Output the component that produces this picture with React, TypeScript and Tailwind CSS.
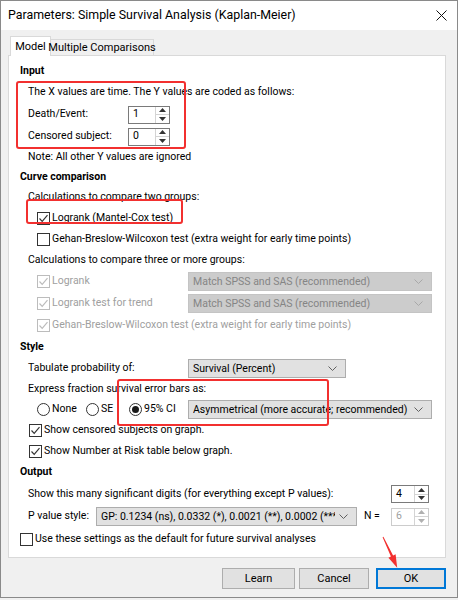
import { type JSX, type ReactNode } from "react"

const font = { fontFamily: 'Roboto, "Liberation Sans", sans-serif' }

function Check({ on, disabled }: { on?: boolean; disabled?: boolean }): JSX.Element {
  const c = disabled ? "#bcbcbc" : "#333333"
  return (
    <span className={`inline-flex h-[13px] w-[13px] shrink-0 items-center justify-center border bg-white ${disabled ? "border-[#bcbcbc]" : "border-[#333333]"}`}>
      {on && (
        <svg width="11" height="11" viewBox="0 0 11 11">
          <polyline points="1.5,5.5 4.2,8.3 9.5,2.2" fill="none" stroke={c} strokeWidth="1.2" />
        </svg>
      )}
    </span>
  )
}

function Radio({ on }: { on?: boolean }): JSX.Element {
  return (
    <span className="inline-flex h-[13px] w-[13px] shrink-0 items-center justify-center rounded-full border border-[#333333] bg-white">
      {on && <span className="h-[7px] w-[7px] rounded-full bg-[#1a1a1a]" />}
    </span>
  )
}

function Chevron({ color = "#606060" }: { color?: string }): JSX.Element {
  return (
    <svg width="9" height="5" viewBox="0 0 9 5" className="shrink-0">
      <polyline points="0.5,0.5 4.5,4.5 8.5,0.5" fill="none" stroke={color} strokeWidth="1" />
    </svg>
  )
}

function Select({ text, width, disabled }: { text: string; width: string; disabled?: boolean }): JSX.Element {
  return (
    <div
      className={`flex h-[19px] shrink-0 items-center gap-1 border pl-[4px] pr-[8px] ${width} ${
        disabled ? "border-[#c4c4c4] bg-[#cccccc] text-[#858585]" : "border-[#adadad] bg-[#e1e1e1] text-black"
      }`}
    >
      <span className="flex-1 overflow-hidden whitespace-nowrap leading-[17px]">{text}</span>
      <Chevron color={disabled ? "#a8a8a8" : "#606060"} />
    </div>
  )
}

function Spin({ value, width = "w-[42px]", disabled }: { value: string; width?: string; disabled?: boolean }): JSX.Element {
  const c = disabled ? "#b0b0b0" : "#333333"
  return (
    <div className={`flex h-[18px] shrink-0 border bg-white ${width} ${disabled ? "border-[#cccccc] text-[#a0a0a0]" : "border-[#7a7a7a] text-black"}`}>
      <span className="flex flex-1 items-center pl-[4px]">{value}</span>
      <div className="flex w-[14px] flex-col border-l border-[#d4d4d4]">
        <div className="flex flex-1 items-center justify-center border-b border-[#d4d4d4]">
          <svg width="7" height="4" viewBox="0 0 7 4"><polygon points="0,4 3.5,0 7,4" fill={c} /></svg>
        </div>
        <div className="flex flex-1 items-center justify-center">
          <svg width="7" height="4" viewBox="0 0 7 4"><polygon points="0,0 7,0 3.5,4" fill={c} /></svg>
        </div>
      </div>
    </div>
  )
}

function Row({ h, className = "", children }: { h: string; className?: string; children: ReactNode }): JSX.Element {
  return <div className={`flex items-center whitespace-nowrap ${h} ${className}`}>{children}</div>
}

function Button({ label, width, primary }: { label: string; width: string; primary?: boolean }): JSX.Element {
  return (
    <div
      className={`flex h-[21px] items-center justify-center bg-[#e1e1e1] ${width} ${
        primary ? "border-2 border-[#0078d7]" : "border border-[#adadad]"
      }`}
    >
      {label}
    </div>
  )
}

export default function App(): JSX.Element {
  return (
    <div className="relative h-[600px] w-[458px] overflow-hidden bg-[#f0f0f0] text-[10.5px] leading-none text-black" style={font}>
      <div className="flex h-[598px] flex-col border border-[#8a8a8a]">
        {/* title bar */}
        <div className="flex h-[29px] shrink-0 items-center justify-between bg-white pl-[7px] pr-[10px] text-[12.4px]">
          <span>Parameters: Simple Survival Analysis (Kaplan-Meier)</span>
          <svg width="11" height="11" viewBox="0 0 11 11">
            <path d="M0.5 0.5 L10.5 10.5 M10.5 0.5 L0.5 10.5" stroke="#111" strokeWidth="1" />
          </svg>
        </div>

        <div className="flex-1 px-[7px] pt-[6px]">
          {/* tabs */}
          <div className="relative z-10 flex h-[20px] items-end whitespace-nowrap pl-[2px] text-[11px]">
            <div className="flex h-[20px] w-[41px] items-center justify-center border border-b-0 border-[#d9d9d9] bg-white pb-[1px]">
              Model
            </div>
            <div className="flex h-[17px] w-[103px] items-center justify-center border border-l-0 border-[#d9d9d9] bg-[#f0f0f0]">
              Multiple Comparisons
            </div>
          </div>

          {/* model page */}
          <div className="-mt-px h-[503px] w-[438px] border border-[#d9d9d9] bg-white pl-[11px] pt-[5px]">
            <Row h="h-[20px]" className="font-bold">Input</Row>
            <Row h="h-[22px]" className="pl-[8px]">The X values are time. The Y values are coded as follows:</Row>
            <Row h="h-[23px]" className="pl-[8px]">
              <span className="w-[100px]">Death/Event:</span>
              <Spin value="1" />
            </Row>
            <Row h="h-[21px]" className="pl-[8px]">
              <span className="w-[100px]">Censored subject:</span>
              <Spin value="0" />
            </Row>
            <Row h="h-[21px]" className="pl-[8px]">Note: All other Y values are ignored</Row>

            <Row h="h-[19px]" className="font-bold">Curve comparison</Row>
            <Row h="h-[21px]" className="pl-[8px]">Calculations to compare two groups:</Row>
            <Row h="h-[21px]" className="gap-[2px] pl-[17px]">
              <Check on />
              <span>Logrank (Mantel-Cox test)</span>
            </Row>
            <Row h="h-[21px]" className="gap-[2px] pl-[17px]">
              <Check />
              <span>Gehan-Breslow-Wilcoxon test (extra weight for early time points)</span>
            </Row>
            <Row h="h-[21px]" className="pl-[8px]">Calculations to compare three or more groups:</Row>
            <Row h="h-[21px]" className="pl-[17px] text-[#a0a0a0]">
              <div className="flex w-[151px] items-center gap-[2px]">
                <Check on disabled />
                <span>Logrank</span>
              </div>
              <Select text="Match SPSS and SAS (recommended)" width="w-[244px]" disabled />
            </Row>
            <Row h="h-[22px]" className="pl-[17px] text-[#a0a0a0]">
              <div className="flex w-[151px] items-center gap-[2px]">
                <Check on disabled />
                <span>Logrank test for trend</span>
              </div>
              <Select text="Match SPSS and SAS (recommended)" width="w-[244px]" disabled />
            </Row>
            <Row h="h-[23px]" className="gap-[2px] pl-[17px] text-[#a0a0a0]">
              <Check on disabled />
              <span>Gehan-Breslow-Wilcoxon test (extra weight for early time points)</span>
            </Row>

            <Row h="h-[20px]" className="font-bold">Style</Row>
            <Row h="h-[22px]" className="pl-[8px]">
              <span className="w-[160px]">Tabulate probability of:</span>
              <Select text="Survival (Percent)" width="w-[158px]" />
            </Row>
            <Row h="h-[20px]" className="pl-[8px]">Express fraction survival error bars as:</Row>
            <Row h="h-[20px]" className="pl-[17px]">
              <div className="flex w-[151px] items-center">
                <Radio />
                <span className="ml-[2px] w-[34px]">None</span>
                <Radio />
                <span className="ml-[2px] w-[28px]">SE</span>
                <Radio on />
                <span className="ml-[2px]">95% CI</span>
              </div>
              <Select text="Asymmetrical (more accurate; recommended)" width="w-[244px]" />
            </Row>
            <Row h="h-[22px]" className="gap-[2px] pl-[9px]">
              <Check on />
              <span>Show censored subjects on graph.</span>
            </Row>
            <Row h="h-[20px]" className="gap-[2px] pl-[9px]">
              <Check on />
              <span>Show Number at Risk table below graph.</span>
            </Row>

            <Row h="h-[22px]" className="font-bold">Output</Row>
            <Row h="h-[22px]" className="pl-[8px]">
              <span className="w-[363px]">Show this many significant digits (for everything except P values):</span>
              <Spin value="4" width="w-[38px]" />
            </Row>
            <Row h="h-[23px]" className="pl-[8px]">
              <span className="w-[68px]">P value style:</span>
              <Select text="GP: 0.1234 (ns), 0.0332 (*), 0.0021 (**), 0.0002 (***), <0.0001 (****)" width="w-[261px]" />
              <span className="ml-[7px] w-[27px]">N =</span>
              <Spin value="6" width="w-[38px]" disabled />
            </Row>
            <Row h="h-[22px]" className="gap-[2px]">
              <Check />
              <span>Use these settings as the default for future survival analyses</span>
            </Row>
          </div>

          {/* dialog buttons */}
          <div className="mt-[10px] flex w-[438px] justify-end text-[11px]">
            <Button label="Learn" width="w-[73px]" />
            <div className="ml-[4px]">
              <Button label="Cancel" width="w-[70px]" />
            </div>
            <div className="ml-[7px]">
              <Button label="OK" width="w-[70px]" primary />
            </div>
          </div>
        </div>
      </div>

      {/* red highlight marks drawn over the dialog */}
      <div className="pointer-events-none absolute left-[16px] top-[81px] h-[68px] w-[170px] rounded-[3px] border-2 border-[#f2302f]" />
      <div className="pointer-events-none absolute left-[26px] top-[199px] h-[25px] w-[157px] rounded-[3px] border-2 border-[#f2302f]" />
      <div className="pointer-events-none absolute left-[117px] top-[379px] h-[47px] w-[212px] rounded-[3px] border-2 border-[#f2302f]" />
      <svg className="pointer-events-none absolute left-0 top-0" width="458" height="600" viewBox="0 0 458 600">
        <polygon
          points="382.6,537.2 383.4,536.8 393.1,555.5 395.6,554.3 397.2,567.8 388.4,557.7 390.9,556.5"
          fill="#f2302f"
        />
      </svg>
    </div>
  )
}
